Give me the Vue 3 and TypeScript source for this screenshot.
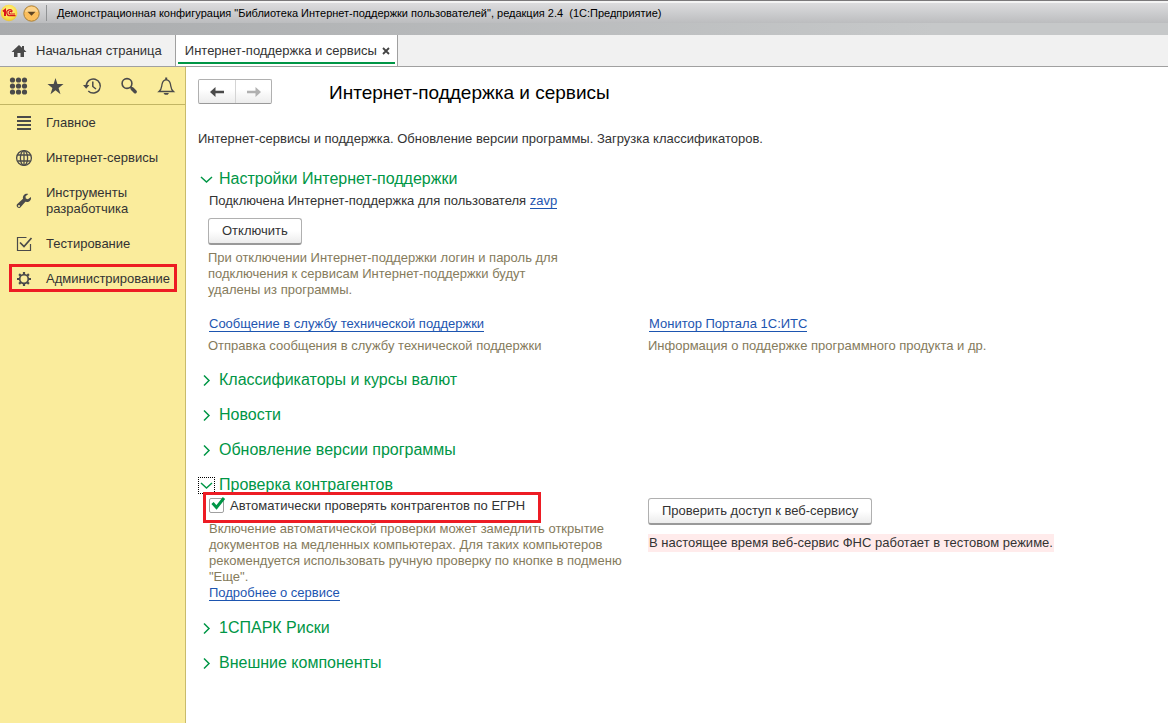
<script setup lang="ts">
import { ref } from 'vue'

interface NavItem {
  label: string
  icon: 'menu' | 'globe' | 'wrench' | 'check' | 'gear'
  marked?: boolean
}

const navItems: NavItem[] = [
  { label: 'Главное', icon: 'menu' },
  { label: 'Интернет-сервисы', icon: 'globe' },
  { label: 'Инструменты разработчика', icon: 'wrench' },
  { label: 'Тестирование', icon: 'check' },
  { label: 'Администрирование', icon: 'gear', marked: true },
]

const collapsed: string[] = ['Классификаторы и курсы валют', 'Новости', 'Обновление версии программы']
const trailing: string[] = ['1СПАРК Риски', 'Внешние компоненты']
const autoCheck = ref(true)
</script>

<template>
  <div class="app">
    <header class="titlebar">
      <div class="caption">
        <svg class="logo" width="18" height="18" viewBox="0 0 18 18" aria-hidden="true">
          <defs>
            <radialGradient id="logoFill" cx="50%" cy="40%" r="60%">
              <stop offset="0" stop-color="#fff6a0" />
              <stop offset="0.7" stop-color="#fbe04a" />
              <stop offset="1" stop-color="#e9bf3a" />
            </radialGradient>
          </defs>
          <circle cx="9" cy="9" r="8.3" fill="url(#logoFill)" />
          <path d="M3 7.500l2-1.500v6" fill="none" stroke="#d8151c" stroke-width="2" />
          <path d="M12.500 7.400A3 3 0 1 0 10.300 11.700H15.500M11.700 8.400A1.300 1.300 0 1 0 10.600 10H15" fill="none" stroke="#d8151c" stroke-width="1.200" />
        </svg>
        <button class="menu-btn" aria-label="Меню">
          <svg width="17" height="17" viewBox="0 0 17 17">
            <circle cx="8.500" cy="8.500" r="7.700" fill="#fbbf5d" stroke="#a8803c" stroke-width="1" />
            <path d="M2.200 7a6.400 6.400 0 0 1 12.600 0z" fill="#fdd48c" />
            <path d="M4.500 6.800h8l-4 4z" fill="#5c4424" />
          </svg>
        </button>
        <span class="caption-sep"></span>
        <span class="caption-text">Демонстрационная конфигурация "Библиотека Интернет-поддержки пользователей", редакция 2.4 &nbsp;(1С:Предприятие)</span>
      </div>
    </header>

    <nav class="tabs" aria-label="Вкладки">
      <button class="tab home">
        <svg width="16" height="14" viewBox="0 0 16 14" aria-hidden="true">
          <path d="M8 1L.5 8H3v5h3.500V9h3v4H13V8h2.500L13 5.600V2h-2v1.800z" fill="#4a4a4a" />
        </svg>
        <span>Начальная страница</span>
      </button>
      <div class="tab active">
        <a class="tab-link" href="#">Интернет-поддержка и сервисы</a>
        <button class="tab-close" aria-label="Закрыть">
          <svg width="8" height="8" viewBox="0 0 8 8"><path d="M1 1l6 6M7 1L1 7" stroke="#444" stroke-width="1.800" /></svg>
        </button>
      </div>
    </nav>

    <div class="body">
      <aside class="sidebar">
        <div class="tools">
          <button aria-label="Все функции">
            <svg width="20" height="20" viewBox="0 0 20 20" fill="#4a4a4a">
              <circle cx="4.500" cy="4" r="2.600" /><circle cx="10.500" cy="4" r="2.600" /><circle cx="16.500" cy="4" r="2.600" />
              <circle cx="4.500" cy="10" r="2.600" /><circle cx="10.500" cy="10" r="2.600" /><circle cx="16.500" cy="10" r="2.600" />
              <circle cx="4.500" cy="16" r="2.600" /><circle cx="10.500" cy="16" r="2.600" /><circle cx="16.500" cy="16" r="2.600" />
            </svg>
          </button>
          <button aria-label="Избранное">
            <svg width="20" height="20" viewBox="0 0 20 20">
              <path d="M10.500 2l1.900 6h6.100l-4.900 3.900 1.900 6.300-5-3.900-5 3.900 1.900-6.300L2.500 8h6.100z" fill="#4a4a4a" />
            </svg>
          </button>
          <button aria-label="История">
            <svg width="20" height="20" viewBox="0 0 20 20" fill="none" stroke="#4a4a4a" stroke-width="1.500">
              <path d="M4.300 10.500V10a7 7 0 1 1 2 4.900M10.800 5.500v5l3.200 2.500" />
              <path d="M1 9h6.400l-3.200 3.700z" fill="#4a4a4a" stroke="none" />
            </svg>
          </button>
          <button aria-label="Поиск">
            <svg width="20" height="20" viewBox="0 0 20 20" fill="none" stroke="#4a4a4a">
              <circle cx="8" cy="7.500" r="4.900" stroke-width="1.600" />
              <path d="M11.500 11l1.500 1.500" stroke-width="2" />
              <path d="M13.200 12.700l3 3" stroke-width="3.400" stroke-linecap="round" />
            </svg>
          </button>
          <button aria-label="Уведомления">
            <svg width="20" height="20" viewBox="0 0 20 20" fill="none" stroke="#4a4a4a" stroke-width="1.300">
              <path d="M3 15.500h14.500c-2.800-2.300-2.500-4.500-3-7.200C14 5.800 12.500 3.800 10.200 3.800S6.500 5.800 6 8.300c-.5 2.700-.2 4.900-3 7.200z" />
              <path d="M10.200 4V1.500" stroke-width="2" />
              <path d="M7.500 17h5.500l-1.300 1.800H8.800z" fill="#4a4a4a" stroke="none" />
            </svg>
          </button>
        </div>
        <ul class="nav">
          <li v-for="item in navItems" :key="item.label" :class="{ marked: item.marked }">
            <a href="#">
              <svg class="nav-icon" width="18" height="18" viewBox="0 0 18 18" aria-hidden="true">
                <path v-if="item.icon === 'menu'" d="M2 3h14M2 7h14M2 11h14M2 15h14" stroke="#4a4a4a" stroke-width="2" />
                <g v-else-if="item.icon === 'globe'" fill="none" stroke="#4a4a4a" stroke-width="1.300">
                  <circle cx="9" cy="9" r="7.400" />
                  <ellipse cx="9" cy="9" rx="3.600" ry="7.400" />
                  <path d="M9 1.600v14.800M2.500 6h13M2.500 12h13" />
                </g>
                <g v-else-if="item.icon === 'wrench'">
                  <path d="M15.900 4.900l-3 2.300-2.100-.7-.3-2.200 2.800-2.200C10.500 1 7.300 3.300 8 6.700L2.300 12.100c-1.900 2 .8 5.200 3 3.400l5.100-5.700c3.700.8 6.300-1.900 5.500-4.900z" fill="#4a4a4a" />
                  <circle cx="4" cy="13.900" r="1" fill="#faec9c" />
                </g>
                <g v-else-if="item.icon === 'check'" fill="none" stroke="#4a4a4a">
                  <path d="M11.500 2.500h-9v13h13V9" stroke-width="1.200" />
                  <path d="M5 7.500l4 4 7.500-8.500" stroke-width="1.700" />
                </g>
                <g v-else fill="none" stroke="#4a4a4a">
                  <circle cx="9" cy="9" r="4.300" stroke-width="1.700" />
                  <path d="M9 2v2.500M9 13.500V16M2 9h2.500M13.500 9H16M4.100 4.100l1.700 1.700M12.200 12.200l1.700 1.700M4.100 13.900l1.700-1.700M12.200 5.800l1.700-1.700" stroke-width="2.200" />
                </g>
              </svg>
              <span>{{ item.label }}</span>
            </a>
          </li>
        </ul>
      </aside>

      <main class="page">
        <div class="page-head">
          <div class="history">
            <button aria-label="Назад">
              <svg width="16" height="12" viewBox="0 0 16 12"><path d="M1 6l5.500-5v3.800H15v2.400H6.500V11z" fill="#4a4a4a" /></svg>
            </button>
            <button aria-label="Вперед">
              <svg width="16" height="12" viewBox="0 0 16 12"><path d="M15 6L9.500 1v3.800H1v2.400h8.500V11z" fill="#b0b0b0" /></svg>
            </button>
          </div>
          <h1>Интернет-поддержка и сервисы</h1>
        </div>
        <p class="intro">Интернет-сервисы и поддержка. Обновление версии программы. Загрузка классификаторов.</p>

        <section class="group">
          <h2>
            <button class="toggle">
              <span class="arrow"><svg width="13" height="13" viewBox="0 0 13 13"><path d="M1 4l5.500 5L12 4" /></svg></span>
              <span>Настройки Интернет-поддержки</span>
            </button>
          </h2>
          <div class="settings">
            <p class="account">Подключена Интернет-поддержка для пользователя <a class="link" href="#">zavp</a></p>
            <button class="btn disconnect">Отключить</button>
            <p class="hint narrow">При отключении Интернет-поддержки логин и пароль для подключения к сервисам Интернет-поддержки будут удалены из программы.</p>
          </div>
          <div class="columns support">
            <div class="entry">
              <a class="link" href="#">Сообщение в службу технической поддержки</a>
              <p class="hint">Отправка сообщения в службу технической поддержки</p>
            </div>
            <div class="entry">
              <a class="link" href="#">Монитор Портала 1С:ИТС</a>
              <p class="hint">Информация о поддержке программного продукта и др.</p>
            </div>
          </div>
        </section>

        <section v-for="title in collapsed" :key="title" class="group">
          <h2>
            <button class="toggle">
              <span class="arrow"><svg width="13" height="13" viewBox="0 0 13 13"><path d="M4 1.500l5 5-5 5" /></svg></span>
              <span>{{ title }}</span>
            </button>
          </h2>
        </section>

        <section class="group">
          <h2>
            <button class="toggle">
              <span class="arrow focused"><svg width="13" height="13" viewBox="0 0 13 13"><path d="M1 4l5.500 5L12 4" /></svg></span>
              <span>Проверка контрагентов</span>
            </button>
          </h2>
          <div class="columns contractors">
            <div class="check-col">
              <div class="check-row">
                <label>
                  <span class="box">
                    <input v-model="autoCheck" type="checkbox" />
                    <svg v-if="autoCheck" class="tick" width="16" height="16" viewBox="0 0 16 16"><path d="M2.500 7l4 4.500L14 2" /></svg>
                  </span>
                  <span>Автоматически проверять контрагентов по ЕГРН</span>
                </label>
                <span class="frame"></span>
              </div>
              <p class="hint wide">Включение автоматической проверки может замедлить открытие документов на медленных компьютерах. Для таких компьютеров рекомендуется использовать ручную проверку по кнопке в подменю "Еще".</p>
              <a class="link" href="#">Подробнее о сервисе</a>
            </div>
            <div class="service">
              <button class="btn">Проверить доступ к веб-сервису</button>
              <p class="notice">В настоящее время веб-сервис ФНС работает в тестовом режиме.</p>
            </div>
          </div>
        </section>

        <section v-for="title in trailing" :key="title" class="group">
          <h2>
            <button class="toggle">
              <span class="arrow"><svg width="13" height="13" viewBox="0 0 13 13"><path d="M4 1.500l5 5-5 5" /></svg></span>
              <span>{{ title }}</span>
            </button>
          </h2>
        </section>
      </main>
    </div>
  </div>
</template>

<style>
body {
  margin: 0;
}
</style>

<style scoped>
.app {
  display: flex;
  flex-direction: column;
  min-height: 100vh;
  background: #fff;
  color: #333;
  font: 13px/16px "Liberation Sans", Arial, sans-serif;
}
.app *,
.app *::before {
  box-sizing: border-box;
}
button {
  margin: 0;
  padding: 0;
  border: 0;
  background: none;
  color: inherit;
  font: inherit;
}
h1, h2, p, ul {
  margin: 0;
  padding: 0;
  font-weight: normal;
}
svg {
  display: block;
  flex: none;
}
.titlebar {
  height: 35px;
  border-top: 1px solid #7b797b;
  background: linear-gradient(90deg, #a9abad, #c6c8c9 80%);
}
.caption {
  display: flex;
  align-items: center;
  height: 22px;
  border-top: 2px solid #f4f4f4;
  background: linear-gradient(#dcdcde, #bcbdbf);
  color: #000;
  font-size: 11px;
}
.menu-btn {
  margin-left: 5px;
}
.caption-sep {
  width: 1px;
  height: 16px;
  margin: 0 10px 0 6px;
  background: #909294;
}
.tabs {
  display: flex;
  height: 32px;
  border-bottom: 1px solid #a0a0a0;
  background: #f1f1f1;
}
.tab {
  display: flex;
  align-items: center;
}
.home {
  gap: 9px;
  padding: 0 13px 0 11px;
}
.active {
  position: relative;
  gap: 5px;
  padding: 0 7px 0 9px;
  border: solid #a0a0a0;
  border-width: 0 1px;
  background: #fff;
}
.active::before {
  content: "";
  position: absolute;
  right: 2px;
  bottom: 2px;
  left: 2px;
  height: 2px;
  background: #009646;
}
.tab-link {
  color: inherit;
  text-decoration: none;
}
.body {
  display: flex;
  flex: 1;
}
.sidebar {
  flex: none;
  width: 186px;
  border-right: 1px solid #c8bb6c;
  background: #faec9c;
}
.tools {
  display: flex;
  align-items: center;
  gap: 17px;
  height: 38px;
  padding-left: 8px;
  border-bottom: 1px solid #c2b564;
}
.nav {
  display: flex;
  flex-direction: column;
  gap: 19px;
  padding: 10px 8px 0 9px;
  list-style: none;
}
.nav li {
  position: relative;
}
.nav a {
  display: flex;
  align-items: center;
  gap: 13px;
  padding-left: 6px;
  color: #333;
  text-decoration: none;
}
.nav-icon {
  margin: -1px 0;
}
.marked::before {
  content: "";
  position: absolute;
  inset: -7px 0 -5px;
  border: 3px solid #ed1c24;
}
.page {
  flex: 1;
  min-width: 0;
  padding: 12px 12px 24px;
}
.page-head {
  display: flex;
  align-items: center;
  gap: 57px;
}
.history {
  display: flex;
  border: 1px solid #b0b0b0;
  border-bottom-color: #999;
  border-radius: 2px;
  background: linear-gradient(#fff 40%, #ececec);
}
.history button {
  display: flex;
  align-items: center;
  justify-content: center;
  width: 36px;
  height: 23px;
}
.history button + button {
  border-left: 1px solid #d4d4d4;
}
h1 {
  padding-top: 2px;
  color: #000;
  font-size: 19px;
  line-height: 22px;
}
.intro {
  margin: 27px 0 22px;
}
.group {
  margin-bottom: 15px;
}
.toggle {
  display: flex;
  align-items: center;
  gap: 4px;
  color: #009646;
  font-size: 16px;
  line-height: 20px;
}
.arrow {
  padding: 1px;
  border: 1px solid transparent;
}
.arrow path {
  fill: none;
  stroke: #009646;
  stroke-width: 1.5;
}
.focused {
  border: 1px dotted #000;
}
.settings {
  padding: 4px 0 0 10px;
}
.account {
  padding-left: 1px;
}
.btn {
  height: 27px;
  padding: 0 13px;
  border: 1px solid #b0b0b0;
  border-bottom: 2px solid #999;
  border-radius: 3px;
  background: linear-gradient(#fff 50%, #ececec);
}
.disconnect {
  margin: 9px 0 5px;
}
.link {
  border-bottom: 1px solid #1d55b0;
  color: #1d55b0;
  text-decoration: none;
  line-height: 14px;
}
.hint {
  color: #857b5c;
}
.narrow {
  max-width: 360px;
}
.wide {
  max-width: 425px;
}
.columns {
  display: grid;
  grid-template-columns: 440px 1fr;
  padding-left: 10px;
}
.support {
  margin: 18px 0 16px;
}
.entry .link {
  margin-left: 1px;
}
.entry .hint {
  margin-top: 6px;
}
.contractors {
  margin: 3px 0 17px;
}
.check-col {
  padding-left: 1px;
}
.check-row {
  position: relative;
  margin-bottom: 7px;
}
.check-row label {
  display: flex;
  align-items: center;
  gap: 5px;
}
.box {
  position: relative;
  width: 16px;
  height: 16px;
}
.box input {
  display: block;
  width: 15px;
  height: 15px;
  margin: 0;
  border: 1px solid #a0a0a0;
  border-radius: 2px;
  background: #fff;
  appearance: none;
}
.tick {
  position: absolute;
  top: -2px;
  left: 1px;
  fill: none;
  stroke: #009646;
  stroke-width: 3;
}
.frame {
  position: absolute;
  top: -6px;
  left: -6px;
  width: 338px;
  height: 31px;
  border: 3px solid #ed1c24;
  pointer-events: none;
}
.service {
  display: flex;
  flex-direction: column;
  align-items: flex-start;
  gap: 9px;
}
.notice {
  padding: 1px;
  background: #ffebeb;
}
</style>
